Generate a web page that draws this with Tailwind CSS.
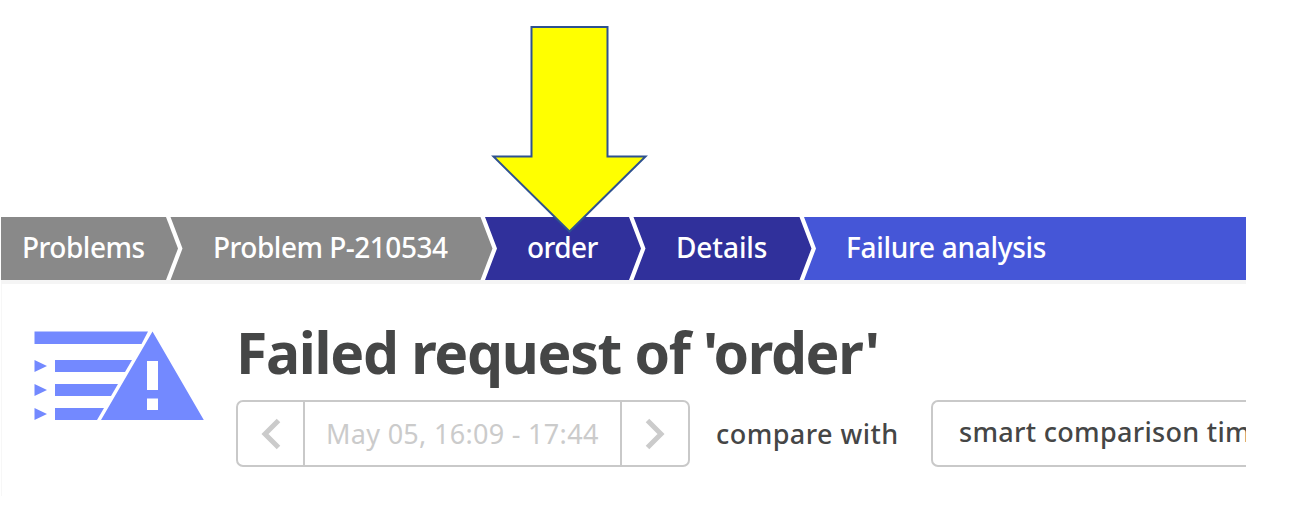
<!DOCTYPE html>
<html lang="en">
<head>
<meta charset="utf-8">
<title>Failure analysis</title>
<script src="https://cdn.jsdelivr.net/npm/@tailwindcss/browser@4"></script>
</head>
<body class="relative h-[520px] w-[1308px] overflow-hidden bg-white pt-[217px] font-['Noto_Sans',sans-serif] text-[#454646]">
  <div class="ml-px w-[1245px] overflow-hidden">
    <nav class="flex h-[67px] border-b-4 border-[#f5f5f5] text-[28px] leading-[60px] font-medium whitespace-nowrap text-white">
      <div class="w-[177px] shrink-0 bg-[#898989] pl-[21px] [clip-path:polygon(0_0,165px_0,100%_50%,165px_100%,0_100%)]"><span class="tracking-[-0.5px]">Problems</span></div>
      <div class="-ml-[8px] w-[323px] shrink-0 bg-[#898989] pl-[43px] [clip-path:polygon(0.5px_0,310.5px_0,322.5px_50%,310.5px_100%,0.5px_100%,12.5px_50%)]"><span class="tracking-[-0.5px]">Problem P-210534</span></div>
      <div class="-ml-[8px] w-[156px] shrink-0 bg-[#30309b] pl-[42px] [clip-path:polygon(0_0,144px_0,100%_50%,144px_100%,0_100%,12px_50%)]"><span class="tracking-[-0.6px]">order</span></div>
      <div class="-ml-[8px] w-[179px] shrink-0 bg-[#30309b] pl-[43px] [clip-path:polygon(0.5px_0,166.5px_0,178.5px_50%,166.5px_100%,0.5px_100%,12.5px_50%)]"><span class="tracking-[-0.1px]">Details</span></div>
      <div class="-ml-[8px] flex-1 bg-[#4556d7] pl-[42px] [clip-path:polygon(0_0,100%_0,100%_100%,0_100%,12px_50%)]"><span class="tracking-[-0.3px]">Failure analysis</span></div>
    </nav>
    <main class="flex h-[212px] border-l border-[#f7f7f7]">
      <svg class="mt-[46px] ml-[32px] h-[92px] w-[172px] shrink-0" viewBox="34 330 172 92" fill="#7389ff">
        <path d="M34.500 331.500H148L141.500 344H34.500zM55 360H132L125 372H55zM55 384H118L111 396H55zM55 408H104L97 420H55z"/>
        <path d="M34.500 360L47 366L34.500 372zM34.500 384L47 390L34.500 396zM34.500 408L47 414L34.500 420z"/>
        <path fill-rule="evenodd" d="M152.500 331.500L203.800 420H101zM147 361V390H158V361zM147 398.500V410H158V398.500z"/>
      </svg>
      <section class="ml-[30px] min-w-0 flex-1">
        <h1 class="mt-[30px] h-[86px] text-[57px] leading-[76px] font-bold tracking-[-1.3px] whitespace-nowrap"><span>Failed request of 'order'</span></h1>
        <div class="flex text-[27px] leading-[63px] whitespace-nowrap">
          <div class="flex h-[67px] w-[454px] shrink-0 rounded-[7px] border-2 border-[#c9c9c9] text-[#cbcbcb]">
            <button class="flex w-[67px] items-center justify-center border-r-2 border-[#c9c9c9]"><svg class="h-[32px] w-[20px]" viewBox="0 0 20 32" fill="none" stroke="#cbcbcb" stroke-width="5"><path d="M17.500 2.500L4 16L17.500 29.500"/></svg></button>
            <div class="w-[317px] border-r-2 border-[#c9c9c9] pl-[21px]"><span class="tracking-[0.3px]">May 05, 16:09 - 17:44</span></div>
            <button class="flex flex-1 items-center justify-center"><svg class="h-[32px] w-[20px]" viewBox="0 0 20 32" fill="none" stroke="#cbcbcb" stroke-width="5"><path d="M2.500 2.500L16 16L2.500 29.500"/></svg></button>
          </div>
          <div class="ml-[26px] w-[215px] shrink-0 pt-[2px]"><span class="font-medium tracking-[0.45px]">compare with</span></div>
          <div class="h-[67px] flex-1 rounded-l-[7px] border-2 border-r-0 border-[#c9c9c9] pl-[26px] leading-[60px]"><span class="font-medium tracking-[0.3px]">smart comparison tim</span></div>
        </div>
      </section>
    </main>
  </div>
  <svg class="absolute top-[20px] left-[485px] h-[220px] w-[170px]" viewBox="485 20 170 220" fill="#ffff00" stroke="#2f528f" stroke-width="2"><path d="M531.500 27H607.500V156.500H645.500L569.500 231.500L493.500 156.500H531.500z"/></svg>
</body>
</html>
